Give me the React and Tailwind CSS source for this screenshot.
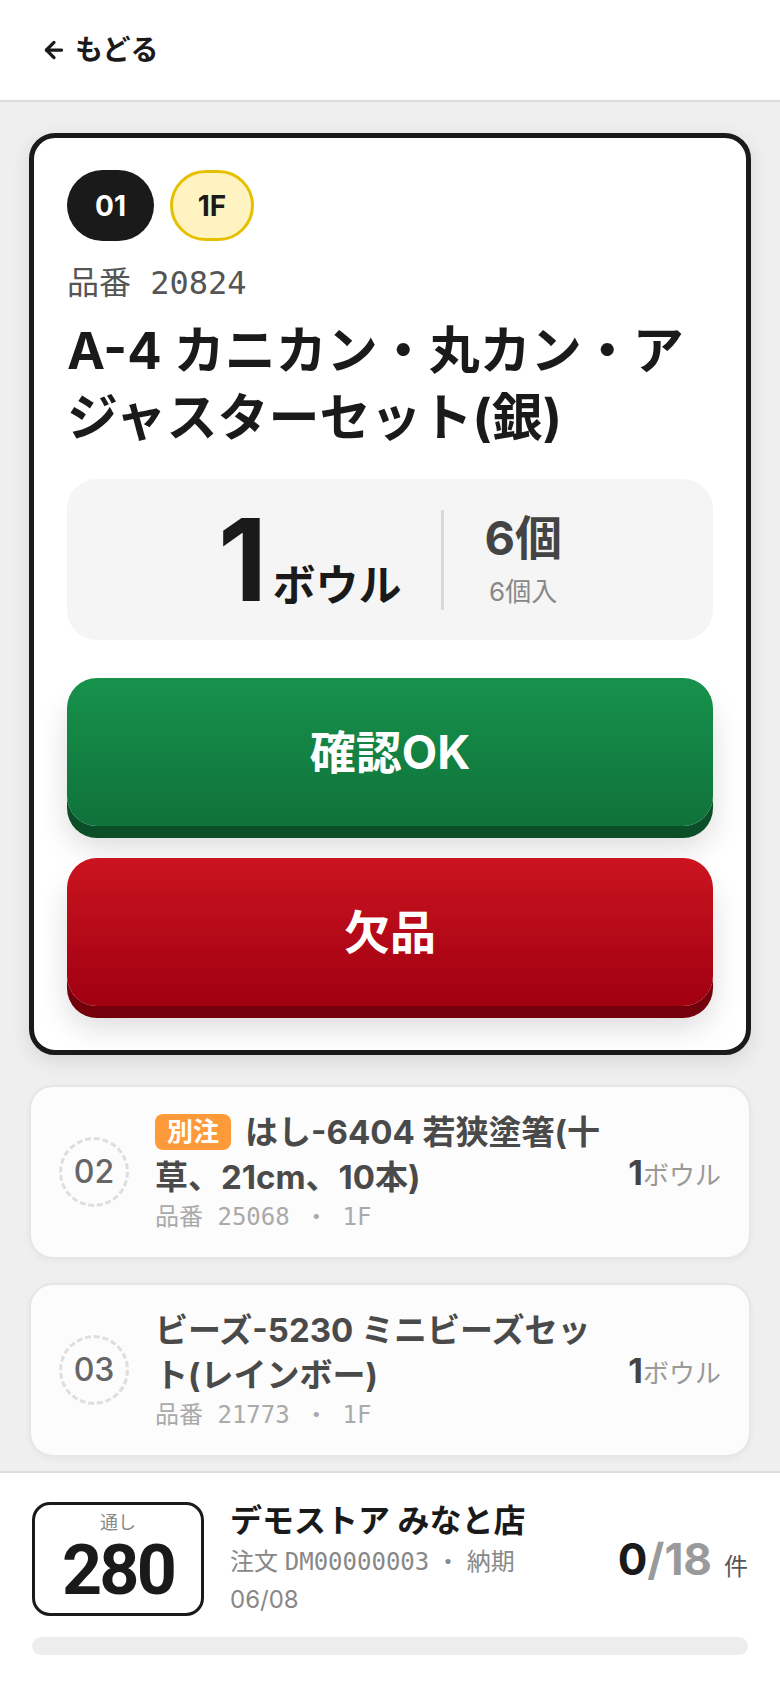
import React from "react";
import { ArrowLeft } from "lucide-react";

// Fuentes: latín + japonés
const sans = "font-['Inter','Noto_Sans_CJK_JP',sans-serif]";
const mono = "font-['DejaVu_Sans_Mono','Noto_Sans_CJK_JP',monospace]";

const pendingItems = [
  {
    no: "02",
    tag: "別注",
    name: "はし-6404 若狭塗箸(十草、21cm、10本)",
    code: "25068",
    floor: "1F",
  },
  {
    no: "03",
    tag: null,
    name: "ビーズ-5230 ミニビーズセット(レインボー)",
    code: "21773",
    floor: "1F",
  },
];

const PendingRow = ({ item }) => (
  <div className="flex items-center rounded-[24px] border-2 border-[#e6e6e6] bg-[#fcfcfc] px-[28px] py-[23px] shadow-[0_2px_6px_rgba(0,0,0,0.04)]">
    {/* Número en círculo punteado */}
    <div className="flex h-[70px] w-[70px] shrink-0 items-center justify-center rounded-full border-[3px] border-dashed border-[#dedede]">
      <span className="text-[32px] font-medium text-[#666]">{item.no}</span>
    </div>

    <div className="ml-[26px] min-w-0 flex-1">
      <div className="text-[33px] font-bold leading-[45px] text-[#4a4a4a]">
        {item.tag ? (
          <span className="mr-[14px] inline-block h-[36px] rounded-[8px] bg-[#ff9a3a] px-[12px] align-[3px] text-[26px] font-bold leading-[36px] text-white">
            {item.tag}
          </span>
        ) : null}
        {item.name}
      </div>
      <div className={`${mono} text-[24px] leading-[34px] text-[#aaa]`}>
        品番 {item.code} ・ {item.floor}
      </div>
    </div>

    <div className="ml-[14px] flex shrink-0 items-baseline">
      <span className="text-[34px] font-bold text-[#444]">1</span>
      <span className="text-[26px] text-[#999]">ボウル</span>
    </div>
  </div>
);

const App = () => {
  return (
    <div className={`${sans} flex h-[1688px] w-[780px] flex-col overflow-hidden bg-[#efefef] text-[#1a1a1a]`}>
      {/* Cabecera */}
      <header className="flex h-[102px] shrink-0 items-center border-b-2 border-[#dcdcdc] bg-white pl-[41px]">
        <button type="button" className="flex items-center gap-[8px] text-[28px] font-bold text-[#1a1a1a]">
          <ArrowLeft size={26} strokeWidth={3} />
          もどる
        </button>
      </header>

      {/* Lista */}
      <main className="flex min-h-0 flex-1 flex-col gap-[24px] overflow-hidden px-[29px] pt-[31px]">
        {/* Tarjeta actual */}
        <section className="mb-[6px] rounded-[26px] border-[5px] border-[#1a1a1a] bg-white px-[33px] pt-[32px] pb-[44px] shadow-[0_6px_20px_rgba(0,0,0,0.10)]">
          <div className="flex gap-[16px]">
            <div className="flex h-[71px] w-[87px] items-center justify-center rounded-full bg-[#1a1a1a] text-[28px] font-bold text-white">
              01
            </div>
            <div className="flex h-[71px] w-[84px] items-center justify-center rounded-full border-[3px] border-[#e6c000] bg-[#fff3c2] text-[28px] font-bold text-[#1a1a1a]">
              1F
            </div>
          </div>

          <div className={`${mono} mt-[22px] text-[32px] leading-[40px] text-[#555]`}>
            品番 20824
          </div>

          <h1 className="mt-[14px] text-[51px] font-bold leading-[67px] text-[#1a1a1a]">
            A-4 カニカン・丸カン・アジャスターセット(銀)
          </h1>

          {/* Cantidad */}
          <div className="mt-[28px] flex h-[161px] items-center justify-center rounded-[30px] bg-[#f5f5f5]">
            <div className="flex items-baseline">
              <span className="text-[114px] font-bold leading-none tracking-tight text-[#1a1a1a]">1</span>
              <span className="ml-[8px] text-[43px] font-bold leading-none text-[#1a1a1a]">ボウル</span>
            </div>
            <div className="mx-[40px] h-[100px] w-[3px] bg-[#dadada]" />
            <div className="flex flex-col items-center">
              <span className="text-[47px] font-bold leading-[52px] text-[#444]">6個</span>
              <span className="mt-[12px] text-[26px] leading-[32px] text-[#888]">6個入</span>
            </div>
          </div>

          {/* Botones */}
          <button
            type="button"
            className="mt-[38px] flex h-[148px] w-full items-center justify-center rounded-[30px] bg-gradient-to-b from-[#17924c] to-[#0f723a] text-[46px] font-bold text-white shadow-[0_12px_0_#0b4f28,0_22px_30px_rgba(0,0,0,0.14)]"
          >
            確認OK
          </button>
          <button
            type="button"
            className="mt-[32px] flex h-[148px] w-full items-center justify-center rounded-[30px] bg-gradient-to-b from-[#cb1420] to-[#a00010] text-[46px] font-bold text-white shadow-[0_12px_0_#74000c,0_22px_30px_rgba(0,0,0,0.14)]"
          >
            欠品
          </button>
        </section>

        {pendingItems.map((item) => (
          <PendingRow key={item.no} item={item} />
        ))}
      </main>

      {/* Pie */}
      <footer className="shrink-0 border-t-2 border-[#dedede] bg-white px-[32px] pt-[26px] pb-[33px]">
        <div className="flex items-center">
          <div className="flex h-[114px] w-[172px] shrink-0 flex-col items-center rounded-[18px] border-[3px] border-[#1a1a1a] pt-[6px]">
            <span className="text-[18px] leading-[24px] text-[#888]">通し</span>
            <span className="font-['Roboto',sans-serif] text-[70px] font-bold leading-[70px] tracking-[-0.04em] text-[#1a1a1a]">
              280
            </span>
          </div>

          <div className="ml-[26px] min-w-0 flex-1">
            <div className="text-[32px] font-bold leading-[44px] text-[#1a1a1a]">デモストア みなと店</div>
            <div className="text-[24px] leading-[37px] text-[#888]">
              注文 <span className={mono}>DM00000003</span> ・ 納期 06/08
            </div>
          </div>

          <div className="ml-[30px] flex shrink-0 items-baseline">
            <span className="text-[44px] font-bold text-[#1a1a1a]">0</span>
            <span className="text-[44px] font-bold text-[#9a9a9a]">/18</span>
            <span className="ml-[12px] text-[24px] text-[#555]">件</span>
          </div>
        </div>

        <div className="mt-[19px] h-[18px] w-full rounded-full bg-[#ededed]" />
      </footer>
    </div>
  );
};

export default App;
